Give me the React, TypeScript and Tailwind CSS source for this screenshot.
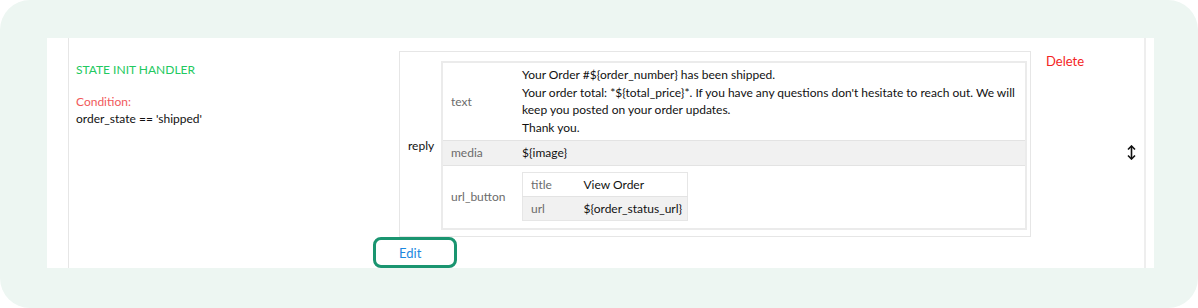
import React from "react";

const keyCell = "px-2 align-middle text-[#6b6b6b] font-normal text-left";
const valCell = "px-2 align-middle text-[#111]";

const ArrowUpDown = () => (
  <svg width="9" height="15" viewBox="0 0 9 15" fill="none">
    <path d="M4.5 1.5v12" stroke="#111" strokeWidth="1.6" />
    <path d="M1 4.5 4.5 1 8 4.5M1 10.5 4.5 14 8 10.5" stroke="#111" strokeWidth="1.6" />
  </svg>
);

const App = () => {
  return (
    <div className="h-[308px] w-[1198px] bg-white font-['Lato','Liberation_Sans',sans-serif] text-[12px] leading-[17.5px]">
      <div className="flex h-full flex-col rounded-[30px] bg-[#edf6f2] pl-[47px] pr-[44px] pt-[38px] pb-[40px]">
        {/* row */}
        <div className="flex h-[230px] bg-white">
          <div className="w-[22px] border-r border-[#e6e6e6]" />
          <div className="flex flex-1 border-r-2 border-[#eeeeee] pl-[7px]">
            {/* handler + condition */}
            <div className="w-[323px] pt-[23px]">
              <p className="text-[#22c960]">STATE INIT HANDLER</p>
              <p className="mt-[14px] text-[#f1595b]">Condition:</p>
              <p className="text-[#111]">order_state == 'shipped'</p>
            </div>
            {/* reply table + edit */}
            <div className="flex flex-col pt-[13px]">
              <div className="flex w-[632px] items-center border border-[#e6e6e6] pb-[6px] pr-[3px] pt-[9px]">
                <span className="w-[41px] pl-[8px] text-[#111]">reply</span>
                <table className="flex-1 border-collapse border-2 border-[#ebebeb]">
                  <tbody>
                    <tr className="h-[78px] border-b border-[#e3e3e3]">
                      <th className={`${keyCell} w-[72px]`}>text</th>
                      <td className={valCell}>
                        Your Order #{"${order_number}"} has been shipped.
                        <br />
                        Your order total: *{"${total_price}"}*. If you have any questions don't hesitate to reach out. We will keep you posted on your order updates.
                        <br />
                        Thank you.
                      </td>
                    </tr>
                    <tr className="h-[25px] border-b border-[#e3e3e3] bg-[#f1f1f1]">
                      <th className={keyCell}>media</th>
                      <td className={valCell}>{"${image}"}</td>
                    </tr>
                    <tr className="h-[64px]">
                      <th className={keyCell}>url_button</th>
                      <td className={valCell}>
                        <table className="border-collapse border border-[#e6e6e6]">
                          <tbody>
                            <tr className="h-[24px] border-b border-[#e3e3e3]">
                              <th className="w-[53px] px-2 text-left font-normal text-[#6b6b6b]">title</th>
                              <td className="pl-2 pr-[5px]">View Order</td>
                            </tr>
                            <tr className="h-[24px] bg-[#f1f1f1]">
                              <th className="px-2 text-left font-normal text-[#6b6b6b]">url</th>
                              <td className="pl-2 pr-[5px]">{"${order_status_url}"}</td>
                            </tr>
                          </tbody>
                        </table>
                      </td>
                    </tr>
                  </tbody>
                </table>
              </div>
              <div className="relative mt-[8px] self-start">
                <a className="block text-[13px] text-[#1b88e0]">Edit</a>
                <span className="absolute -left-[26px] -top-[8px] h-[31px] w-[84px] rounded-[8px] border-[3px] border-[#1a9570]" />
              </div>
            </div>
            {/* actions */}
            <div className="flex flex-1 flex-col pl-[15px] pr-[8px] pt-[15px]">
              <span className="text-[13px] text-[#f42323]">Delete</span>
              <div className="mt-[74px] flex justify-end">
                <ArrowUpDown />
              </div>
            </div>
          </div>
          <div className="w-[8px]" />
        </div>
      </div>
    </div>
  );
};

export default App;
